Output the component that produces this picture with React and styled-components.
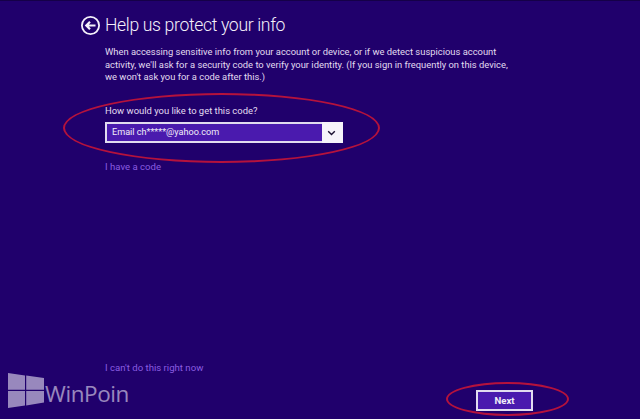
import React from 'react';
import styled, { createGlobalStyle } from 'styled-components';

const GlobalStyle = createGlobalStyle`
    html, body {
        margin: 0;
        padding: 0;
        background: #20006c;
    }
`

const Page = styled.div`
    position: relative;
    box-sizing: border-box;
    width: 640px;
    height: 419px;
    overflow: hidden;
    padding: 12px 0 8px 80px;
    display: flex;
    flex-direction: column;
    background: #20006c;
    border-top: 1px solid #150048;
    color: #e2dcf0;
    font-family: Roboto, "Liberation Sans", sans-serif;
`

const Header = styled.div`
    display: flex;
    align-items: center;
    gap: 4px;
    height: 24px;
`

const Title = styled.h1`
    margin: 0;
    font-size: 17.6px;
    font-weight: 300;
    letter-spacing: -0.35px;
    line-height: 24px;
    color: #f4f0fa;
`

const Content = styled.div`
    padding-left: 25px;
    display: flex;
    flex-direction: column;
    align-items: flex-start;
`

const Description = styled.p`
    margin: 9px 0 0;
    font-size: 9.4px;
    line-height: 12.7px;
    white-space: nowrap;
`

const Label = styled.div`
    margin-top: 20px;
    font-size: 9.45px;
    line-height: 13px;
`

const Select = styled.div`
    margin-top: 5px;
    box-sizing: border-box;
    width: 238px;
    height: 21px;
    display: flex;
    border: 2px solid #e2dcf0;
    background: #4a1aae;
`

const SelectValue = styled.div`
    flex: 1;
    padding-left: 5px;
    font-size: 9.1px;
    line-height: 17px;
    color: #f1edf8;
`

const SelectArrow = styled.div`
    width: 19px;
    margin: -2px -2px -2px 0;
    padding-right: 2px;
    display: flex;
    align-items: center;
    justify-content: center;
    background: #f6f4fa;
`

const TextLink = styled.div`
    font-size: 9.6px;
    line-height: 13px;
    color: #8a5ce0;
`

const CodeLink = styled(TextLink)`
    margin-top: 17px;
`

const Footer = styled.div`
    margin-top: auto;
    padding-left: 25px;
    display: flex;
    justify-content: space-between;
    align-items: flex-end;
`

const CantLink = styled(TextLink)`
    margin-bottom: 37px;
`

const NextButton = styled.div`
    box-sizing: border-box;
    width: 57px;
    height: 21px;
    margin-right: 107px;
    border: 2px solid #e2dcf0;
    background: #4a1aae;
    color: #f1edf8;
    font-size: 9.6px;
    font-weight: 700;
    line-height: 17px;
    text-align: center;
`

const Ring = styled.div`
    position: absolute;
    box-sizing: border-box;
    left: ${p => p.$left}px;
    top: ${p => p.$top}px;
    width: ${p => p.$width}px;
    height: ${p => p.$height}px;
    border: 2px solid #b5123c;
    border-radius: 50%;
`

const Watermark = styled.div`
    position: absolute;
    left: 8px;
    top: 372px;
    display: flex;
    align-items: center;
    gap: 1px;
    opacity: 0.62;
    color: #e2dcf0;
`

const WatermarkText = styled.span`
    font-family: "Open Sans", "Liberation Sans", sans-serif;
    font-size: 22.5px;
    line-height: 26px;
    font-weight: 400;
    letter-spacing: -0.4px;
    margin-top: 6px;
`

function BackIcon() {
    return (
        <svg width="21" height="21" viewBox="0 0 21 21" fill="none" stroke="#f4f0fa">
            <circle cx="10.5" cy="10.5" r="8.6" strokeWidth="1.8" />
            <path d="M15.5 10.5H6.5M10 6.8l-3.7 3.7 3.7 3.7" strokeWidth="2.2" />
        </svg>
    )
}

function ChevronIcon() {
    return (
        <svg width="9" height="6" viewBox="0 0 9 6" fill="none" stroke="#1a1030" strokeWidth="1.4">
            <path d="M1.2 1.2l3.3 3.3 3.3-3.3" />
        </svg>
    )
}

function WindowsLogo() {
    return (
        <svg width="36" height="35" viewBox="0 0 36 35" fill="#e2dcf0">
            <path d="M0 0l17 2.4v14.4H0zM18.2 2.6L36 5v11.8H18.2zM0 18h17v14.6L0 35zM18.2 18H36v11.6l-17.8 2.8z" />
        </svg>
    )
}

export default function App() {
    return (
        <Page>
            <GlobalStyle />
            <Header>
                <BackIcon />
                <Title>Help us protect your info</Title>
            </Header>
            <Content>
                <Description>
                    When accessing sensitive info from your account or device, or if we detect suspicious account<br />
                    activity, we'll ask for a security code to verify your identity. (If you sign in frequently on this device,<br />
                    we won't ask you for a code after this.)
                </Description>
                <Label>How would you like to get this code?</Label>
                <Select>
                    <SelectValue>Email ch*****@yahoo.com</SelectValue>
                    <SelectArrow><ChevronIcon /></SelectArrow>
                </Select>
                <CodeLink>I have a code</CodeLink>
            </Content>
            <Footer>
                <CantLink>I can't do this right now</CantLink>
                <NextButton>Next</NextButton>
            </Footer>
            <Ring $left={63} $top={92} $width={317} $height={70} />
            <Ring $left={446} $top={381} $width={123} $height={34} />
            <Watermark>
                <WindowsLogo />
                <WatermarkText>WinPoin</WatermarkText>
            </Watermark>
        </Page>
    )
}
